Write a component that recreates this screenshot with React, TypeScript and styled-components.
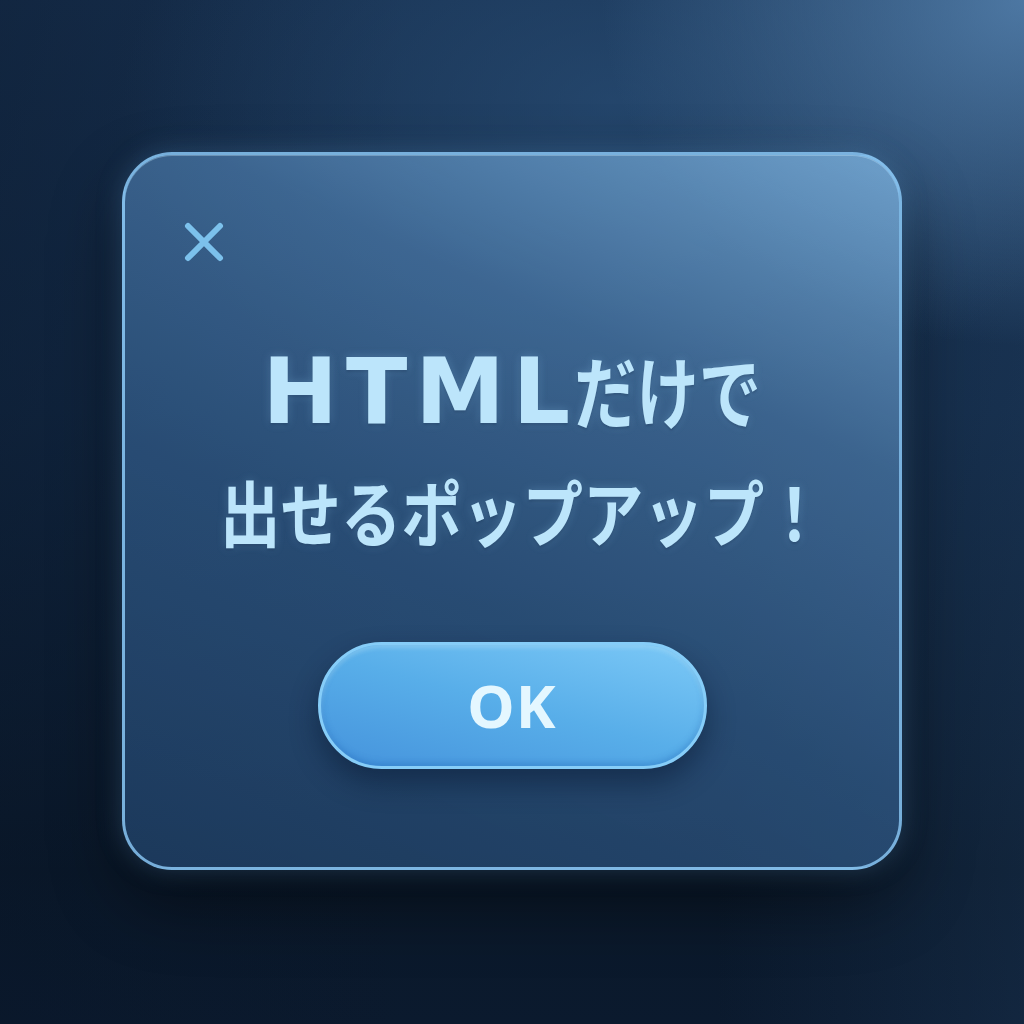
import React from "react";
import styled, { createGlobalStyle } from "styled-components";

const Global = createGlobalStyle`
  html, body {
    margin: 0;
    padding: 0;
  }
  body {
    font-family: "Noto Sans CJK JP", "Noto Sans", sans-serif;
  }
`;

const Page = styled.main`
  width: 1024px;
  height: 1024px;
  display: flex;
  align-items: center;
  justify-content: center;
  overflow: hidden;
  background:
    radial-gradient(ellipse 55% 45% at 100% 0%, rgba(85, 130, 175, 0.85), rgba(85, 130, 175, 0) 75%),
    radial-gradient(ellipse 60% 40% at 60% 10%, rgba(45, 85, 128, 0.6), rgba(45, 85, 128, 0) 80%),
    linear-gradient(90deg, rgba(8, 20, 38, 0.35) 0%, rgba(8, 20, 38, 0) 40%, rgba(40, 75, 115, 0) 70%, rgba(40, 75, 115, 0.25) 100%),
    linear-gradient(180deg, #17304f 0%, #122843 40%, #0a1829 85%, #0b1a2e 100%);
`;

const Card = styled.section`
  box-sizing: border-box;
  width: 780px;
  height: 718px;
  margin-top: -2px;
  border-radius: 50px;
  border: 3px solid rgba(135, 195, 240, 0.85);
  background: linear-gradient(
    205deg,
    rgba(125, 178, 222, 0.8) 0%,
    rgba(75, 122, 170, 0.72) 30%,
    rgba(50, 92, 138, 0.72) 60%,
    rgba(34, 68, 108, 0.75) 100%
  );
  box-shadow:
    0 0 26px rgba(110, 180, 240, 0.25),
    0 30px 70px rgba(0, 0, 0, 0.45),
    inset 0 1px 0 rgba(200, 235, 255, 0.35);
  display: flex;
  flex-direction: column;
  align-items: center;
`;

const TopRow = styled.div`
  align-self: stretch;
  display: flex;
  padding: 67px 0 0 59px;
`;

const CloseButton = styled.button`
  width: 40px;
  height: 40px;
  padding: 0;
  border: none;
  background: transparent;
  cursor: pointer;
  display: flex;
  align-items: center;
  justify-content: center;
`;

const Title = styled.h1`
  margin: 85px 0 0;
  display: flex;
  flex-direction: column;
  align-items: center;
  color: #bce5fb;
  font-weight: 700;
  text-shadow: 0 0 10px rgba(150, 210, 250, 0.25), 0 2px 3px rgba(10, 30, 60, 0.35);
`;

const Line = styled.span<{ $gap?: number; $shift?: number }>`
  display: flex;
  align-items: baseline;
  line-height: 1;
  margin-top: ${({ $gap = 0 }) => $gap}px;
  margin-left: ${({ $shift = 0 }) => $shift}px;
`;

const Latin = styled.span`
  font-family: "DejaVu Sans", "Noto Sans", sans-serif;
  font-size: 90px;
  line-height: 1;
  letter-spacing: 8px;
  margin-right: -4px;
`;

/* condensed kana: the reference face is narrower than Noto Sans CJK */
const Kana = styled.span<{ $chars: number; $size: number; $scale: number }>`
  display: inline-block;
  font-size: ${({ $size }) => $size}px;
  line-height: 1;
  letter-spacing: 0;
  white-space: nowrap;
  transform: scaleX(${({ $scale }) => $scale});
  transform-origin: left center;
  margin-right: ${({ $chars, $scale }) => -$chars * (1 - $scale)}em;
`;

const OkButton = styled.button`
  margin-top: 96px;
  width: 389px;
  height: 127px;
  box-sizing: border-box;
  border-radius: 64px;
  border: 3px solid #86cdf8;
  background: linear-gradient(15deg, #4593dc 0%, #58aee9 50%, #7cc9f7 100%);
  box-shadow:
    0 14px 28px rgba(5, 20, 45, 0.45),
    inset 0 -3px 6px rgba(30, 100, 180, 0.35),
    inset 0 3px 4px rgba(200, 240, 255, 0.35);
  color: #e4f7ff;
  font-family: "Noto Sans", "Noto Sans CJK JP", sans-serif;
  font-weight: 700;
  font-size: 60px;
  letter-spacing: 1px;
  cursor: pointer;
  display: flex;
  align-items: center;
  justify-content: center;
  padding: 0 0 2px;
`;

export default function App() {
  return (
    <Page>
      <Global />
      <Card role="dialog">
        <TopRow>
          <CloseButton aria-label="閉じる">
            <svg width="40" height="40" viewBox="0 0 40 40" fill="none">
              <path
                d="M4 4 L36 36 M36 4 L4 36"
                stroke="#7cc1ec"
                strokeWidth="6"
                strokeLinecap="round"
              />
            </svg>
          </CloseButton>
        </TopRow>
        <Title>
          <Line>
            <Latin>HTML</Latin>
            <Kana $chars={3} $size={78} $scale={0.8}>だけで</Kana>
          </Line>
          <Line $gap={37} $shift={20}>
            <Kana $chars={10} $size={72} $scale={0.84}>出せるポップアップ！</Kana>
          </Line>
        </Title>
        <OkButton>OK</OkButton>
      </Card>
    </Page>
  );
}
